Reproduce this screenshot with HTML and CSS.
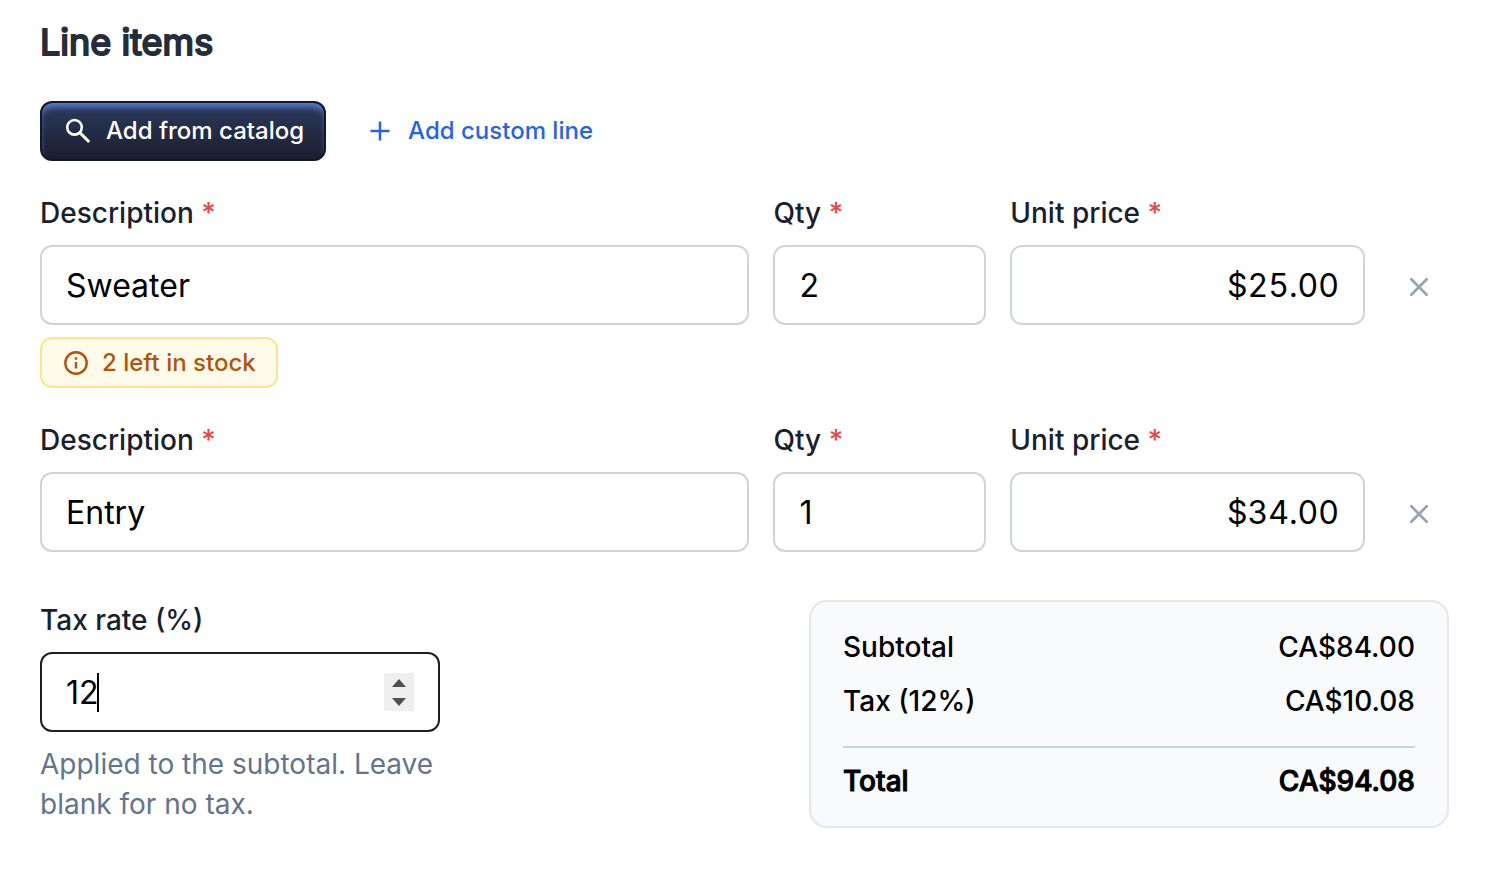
FILE: index.html
```html
<!DOCTYPE html>
<html lang="en">

<head>
    <meta charset="UTF-8">
    <meta name="viewport" content="width=device-width, initial-scale=1.0">
    <title>Line items</title>
    <link rel="stylesheet" href="styles.css">
</head>

<body>
    <form class="line-items">
        <h2 class="title">Line items</h2>

        <div class="actions">
            <button type="button" class="btn btn-primary">
                <svg class="icon" viewBox="0 0 28 28" fill="none" stroke="currentColor" stroke-width="2.6">
                    <circle cx="10.5" cy="11.3" r="7.3" />
                    <path d="M15.8 16.6L25.2 26" stroke-width="3" />
                </svg>
                Add from catalog
            </button>
            <button type="button" class="btn btn-link">
                <svg class="icon" viewBox="0 0 28 28" fill="none" stroke="currentColor" stroke-width="2.5">
                    <path d="M14 5.5V24.5M4.5 15H23.5" />
                </svg>
                Add custom line
            </button>
        </div>

        <!-- item 1 -->
        <div class="item">
            <div class="field">
                <label for="desc1">Description <span class="required">*</span></label>
                <input type="text" id="desc1" value="Sweater">
            </div>
            <div class="field">
                <label for="qty1">Qty <span class="required">*</span></label>
                <input type="number" id="qty1" value="2">
            </div>
            <div class="field">
                <label for="price1">Unit price <span class="required">*</span></label>
                <input type="text" id="price1" class="price" value="$25.00">
            </div>
            <button type="button" class="remove" aria-label="Remove Sweater">
                <svg class="icon" viewBox="0 0 28 28" fill="none" stroke="currentColor" stroke-width="2.7" stroke-linecap="round">
                    <path d="M6.3 6.3L21.7 21.7M21.7 6.3L6.3 21.7" />
                </svg>
            </button>
            <p class="stock">
                <svg class="icon-small" viewBox="0 0 24 24" fill="none" stroke="currentColor" stroke-width="2.4">
                    <circle cx="12" cy="12" r="10.7" />
                    <path d="M12 11V17.5M12 6.3V8.7" />
                </svg>
                2 left in stock
            </p>
        </div>

        <!-- item 2 -->
        <div class="item">
            <div class="field">
                <label for="desc2">Description <span class="required">*</span></label>
                <input type="text" id="desc2" value="Entry">
            </div>
            <div class="field">
                <label for="qty2">Qty <span class="required">*</span></label>
                <input type="number" id="qty2" value="1">
            </div>
            <div class="field">
                <label for="price2">Unit price <span class="required">*</span></label>
                <input type="text" id="price2" class="price" value="$34.00">
            </div>
            <button type="button" class="remove" aria-label="Remove Entry">
                <svg class="icon" viewBox="0 0 28 28" fill="none" stroke="currentColor" stroke-width="2.7" stroke-linecap="round">
                    <path d="M6.3 6.3L21.7 21.7M21.7 6.3L6.3 21.7" />
                </svg>
            </button>
        </div>

        <div class="summary">
            <div class="field tax">
                <label for="tax">Tax rate (%)</label>
                <div class="tax-box">
                    <input type="number" id="tax" value="12" autofocus>
                    <span class="caret"></span>
                </div>
                <p class="help">Applied to the subtotal. Leave blank for no tax.</p>
            </div>

            <dl class="totals">
                <div class="totals-row">
                    <dt>Subtotal</dt>
                    <dd>CA$84.00</dd>
                </div>
                <div class="totals-row">
                    <dt>Tax (12%)</dt>
                    <dd>CA$10.08</dd>
                </div>
                <div class="totals-row total">
                    <dt>Total</dt>
                    <dd>CA$94.08</dd>
                </div>
            </dl>
        </div>
    </form>
</body>

</html>
```
FILE: styles.css
```css
* {
    box-sizing: border-box;
    margin: 0;
    padding: 0;
}

body {
    background-color: #ffffff;
    color: #000000;
    font-family: Inter, 'Liberation Sans', sans-serif;
    font-size: 28px;
    font-weight: 500;
}

.line-items {
    display: flex;
    flex-direction: column;
    gap: 32px;
    padding: 20px 45px 20px 40px;
}

.title {
    margin-bottom: 4px;
    color: #252d3d;
    font-size: 36px;
    font-weight: 400;
    line-height: 45px;
    -webkit-text-stroke: 2px currentColor;
}

/*BUTTONS*/
.actions {
    display: flex;
    gap: 16px;
}

.btn {
    display: flex;
    align-items: center;
    gap: 14px;
    height: 60px;
    padding: 0 20px 2px 22px;
    border: 2px solid transparent;
    border-radius: 12px;
    background: none;
    font-family: inherit;
    font-size: 24px;
    font-weight: 500;
    cursor: pointer;
}

.btn-primary {
    border-color: #14192a;
    background: linear-gradient(#2d3a5e, #1a1f2e);
    box-shadow: inset 0 6px 6px -2px #5b7fd6;
    color: #ffffff;
}

.btn-link {
    color: #2563eb;
}

.icon {
    width: 28px;
    height: 28px;
}

.icon-small {
    width: 24px;
    height: 24px;
}

.remove {
    display: flex;
    align-items: center;
    justify-content: center;
    height: 76px;
    border: none;
    background: none;
    color: #94a3b8;
    cursor: pointer;
}

/*FIELDS*/
.item {
    display: grid;
    grid-template-columns: 10fr 3fr 5fr 60px;
    align-items: end;
    gap: 12px 24px;
}

.field {
    display: flex;
    flex-direction: column;
    gap: 12px;
    min-width: 0;
}

label {
    color: #1a1f2e;
    line-height: 40px;
}

.required {
    color: #ef4444;
}

input {
    width: 100%;
    height: 80px;
    padding: 0 24px;
    border: 2px solid #cbd5e1;
    border-radius: 12px;
    background-color: #ffffff;
    color: #000000;
    font-family: inherit;
    font-size: 32px;
    font-weight: 400;
}

input:focus {
    border-color: #1a1f2e;
    outline: none;
}

input[type="number"] {
    appearance: textfield;
}

.price {
    font-variant-numeric: tabular-nums;
    text-align: right;
}

.stock {
    display: flex;
    grid-column: 1;
    justify-self: start;
    align-items: center;
    gap: 14px;
    padding: 4px 20px 4px 22px;
    border: 2px solid #fde68a;
    border-radius: 12px;
    background-color: #fffbeb;
    color: #b45309;
    font-size: 24px;
    line-height: 39px;
}

/*SUMMARY*/
.summary {
    display: flex;
    justify-content: space-between;
    align-items: flex-start;
    margin-top: 16px;
}

.tax {
    width: 400px;
}

.tax-box {
    position: relative;
}

.tax-box input {
    appearance: auto;
    caret-color: transparent;
}

.tax-box input::-webkit-inner-spin-button {
    appearance: none;
    width: 30px;
    height: 38px;
    background: #efefef url("data:image/svg+xml,%3Csvg xmlns='http://www.w3.org/2000/svg' width='30' height='38'%3E%3Cpath d='M8 14L15 6L22 14ZM8 25L15 33L22 25Z' fill='%23505050'/%3E%3C/svg%3E") center no-repeat;
    opacity: 1;
}

.caret {
    position: absolute;
    top: 21px;
    left: 57px;
    width: 2px;
    height: 39px;
    background-color: #000000;
}

.help {
    color: #64748b;
    font-weight: 400;
    line-height: 40px;
}

.totals {
    display: flex;
    flex-direction: column;
    gap: 12px;
    width: 640px;
    padding: 24px 32px;
    border: 2px solid #e2e8f0;
    border-radius: 18px;
    background-color: #f8fafc;
    line-height: 42px;
}

.totals-row {
    display: flex;
    justify-content: space-between;
}

.total {
    margin-top: 12px;
    padding-top: 12px;
    border-top: 2px solid #cbd5e1;
    -webkit-text-stroke: 1px currentColor;
}
```
